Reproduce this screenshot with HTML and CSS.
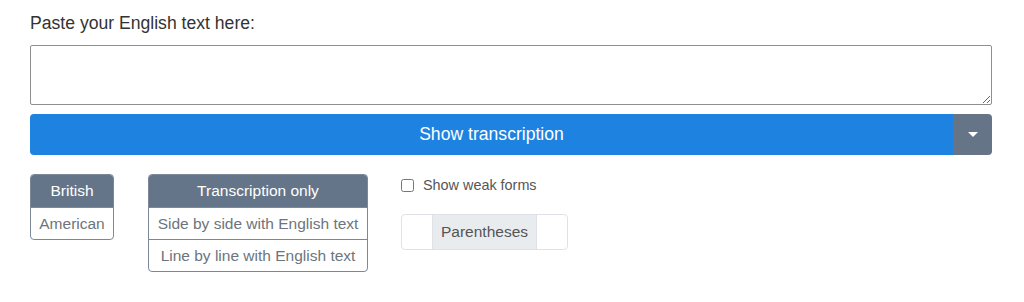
FILE: index.html
```html
<!DOCTYPE html>
<html lang="en">
  <head>
    <meta charset="UTF-8" />
    <meta name="viewport" content="width=device-width, initial-scale=1.0" />
    <title>Transcription</title>
    <link rel="stylesheet" href="styles.css">
  </head>
  <body>
    <div class="page">
      <label class="text-label" for="text-input">Paste your English text here:</label>
      <textarea class="text-input" id="text-input"></textarea>

      <div class="submit-group">
        <button class="button submit-button">Show transcription</button>
        <button class="button toggle-button"><span class="caret"></span></button>
      </div>

      <div class="options">
        <ul class="choice-list accent-list">
          <li class="choice active-choice">British</li>
          <li class="choice">American</li>
        </ul>
        <ul class="choice-list output-list">
          <li class="choice active-choice">Transcription only</li>
          <li class="choice">Side by side with English text</li>
          <li class="choice">Line by line with English text</li>
        </ul>
        <div class="weak-forms">
          <label class="check-label"><input type="checkbox" class="check" /> Show weak forms</label>
          <div class="segment-group">
            <span class="segment"></span>
            <span class="segment segment-active">Parentheses</span>
            <span class="segment"></span>
          </div>
        </div>
      </div>
    </div>
  </body>
</html>
```

FILE: styles.css
```css
body {
  margin: 0;
  font-family: 'Liberation Sans', Arial, sans-serif;
  color: #333;
  background: #fff;
}

.page {
  padding: 13px 32px 0 30px;
}

.text-label {
  display: block;
  font-size: 17.6px;
  margin-bottom: 11px;
}

.text-input {
  display: block;
  box-sizing: border-box;
  width: 100%;
  height: 60px;
  border: 1px solid #8f8f8f;
  border-radius: 2px;
  margin: 0;
  resize: vertical;
}

.submit-group {
  display: flex;
  margin-top: 9px;
  height: 41px;
}

.button {
  border: none;
  cursor: pointer;
  font-family: inherit;
}

.submit-button {
  flex-grow: 1;
  background: #1e83e0;
  color: #fff;
  font-size: 17.6px;
  border-radius: 4px 0 0 4px;
}

.toggle-button {
  width: 39px;
  background: #657486;
  border-radius: 0 4px 4px 0;
  display: flex;
  align-items: center;
  justify-content: center;
}

.caret {
  width: 0;
  height: 0;
  border-left: 5px solid transparent;
  border-right: 5px solid transparent;
  border-top: 5px solid #fff;
}

.options {
  display: flex;
  align-items: flex-start;
  margin-top: 19px;
}

.choice-list {
  list-style: none;
  margin: 0 34px 0 0;
  padding: 0;
  border: 1px solid #7c8899;
  border-radius: 4px;
  overflow: hidden;
}

.accent-list {
  width: 84px;
  box-sizing: border-box;
}

.output-list {
  width: 220px;
  box-sizing: border-box;
  margin-right: 33px;
}

.choice {
  height: 31px;
  line-height: 31px;
  text-align: center;
  font-size: 15.5px;
  color: #6c757d;
  border-top: 1px solid #7c8899;
}

.choice:first-child {
  height: 32px;
  line-height: 32px;
  border-top: none;
}

.active-choice {
  background: #657589;
  color: #fff;
}

.weak-forms {
  display: flex;
  flex-direction: column;
}

.check-label {
  display: flex;
  align-items: center;
  font-size: 14.4px;
  color: #555;
  margin-top: 3px;
}

.check {
  width: 13px;
  height: 13px;
  margin: 0 9px 0 0;
}

.segment-group {
  display: flex;
  margin-top: 21px;
  height: 34px;
  border: 1px solid #dee2e6;
  border-radius: 4px;
  overflow: hidden;
}

.segment {
  width: 30px;
}

.segment-active {
  width: 103px;
  background: #e9ecef;
  color: #555;
  font-size: 15.5px;
  line-height: 34px;
  text-align: center;
  border-left: 1px solid #dee2e6;
  border-right: 1px solid #dee2e6;
}
```
